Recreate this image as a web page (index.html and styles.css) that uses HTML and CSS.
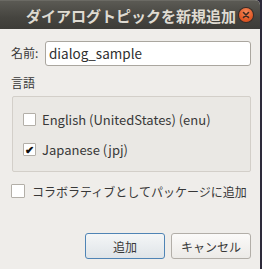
FILE: index.html
```html
<!DOCTYPE html>
<html lang="ja">
<head>
    <meta charset="UTF-8">
    <title>ダイアログトピックを新規追加</title>
    <link rel="stylesheet" href="styles.css">
</head>
<body>
    <div class="window">
        <!-- Title bar -->
        <div class="titlebar">
            <span class="title">ダイアログトピックを新規追加</span>
            <span class="close">
                <svg width="14" height="14" viewBox="0 0 14 14">
                    <path d="M4.5 4.5 L9.5 9.5 M9.5 4.5 L4.5 9.5" stroke="#3a2a22" stroke-width="1.6" stroke-linecap="round"/>
                </svg>
            </span>
        </div>

        <div class="content">
            <div class="name-row">
                <label class="name-label">名前:</label>
                <div class="input">dialog_sample</div>
            </div>

            <div class="section-label">言語</div>

            <div class="frame">
                <div class="check-row">
                    <span class="checkbox"></span>
                    <span class="check-text">English (UnitedStates) (enu)</span>
                </div>
                <div class="check-row">
                    <span class="checkbox checked">✔</span>
                    <span class="check-text">Japanese (jpj)</span>
                </div>
            </div>

            <div class="check-row collab">
                <span class="checkbox"></span>
                <span class="check-text">コラボラティブとしてパッケージに追加</span>
            </div>

            <div class="buttons">
                <button class="btn default">追加</button>
                <button class="btn">キャンセル</button>
            </div>
        </div>
    </div>
</body>
</html>
```

FILE: styles.css
```css
html, body {
    margin: 0;
    padding: 0;
}
body {
    width: 262px;
    height: 269px;
    background: #2d2a3a;
    font-family: "Noto Sans CJK JP", "Noto Sans", sans-serif;
    font-size: 12px;
    color: #383838;
    overflow: hidden;
}
.window {
    width: 260px;
    height: 269px;
    background: #efedea;
    border-top-right-radius: 5px;
    overflow: hidden;
}
.titlebar {
    height: 29px;
    background: linear-gradient(#5b5a54, #45443f 60%, #3d3c38);
    border-top: 1px solid #6b6a64;
    box-sizing: border-box;
    display: flex;
    align-items: center;
    justify-content: flex-end;
    padding-right: 7px;
    gap: 3px;
}
.title {
    color: #dfdbd2;
    font-size: 15px;
    font-weight: bold;
    line-height: 1;
}
.close {
    width: 14px;
    height: 14px;
    border-radius: 50%;
    background: radial-gradient(circle at 50% 30%, #f48a5c, #e25a27 60%, #c8471b);
    box-shadow: 0 0 0 1px #3a2b25;
    display: flex;
}
.content {
    padding: 12px 9px 0 11px;
}
.name-row {
    display: flex;
    align-items: center;
    height: 25px;
}
.name-label {
    width: 34px;
    margin-top: -2px;
}
.input {
    flex: 1;
    height: 25px;
    box-sizing: border-box;
    background: #fff;
    border: 1px solid #aaa69f;
    border-radius: 3px;
    padding: 0 3px;
    line-height: 22px;
    font-size: 13.5px;
    color: #2f2f2f;
}
.section-label {
    margin-top: 8px;
    height: 18px;
    line-height: 18px;
}
.frame {
    margin: 4px 0 0 1px;
    height: 76px;
    box-sizing: border-box;
    background: #eae8e4;
    border: 1px solid #d3cfc9;
    border-radius: 2px;
    padding: 16px 0 0 10px;
    display: flex;
    flex-direction: column;
    gap: 17px;
}
.check-row {
    display: flex;
    align-items: center;
    height: 13px;
    gap: 6px;
    font-size: 13px;
    white-space: nowrap;
}
.checkbox {
    width: 13px;
    height: 13px;
    box-sizing: border-box;
    background: #fff;
    border: 1px solid #b3afa8;
    border-radius: 1px;
    display: flex;
    align-items: center;
    justify-content: center;
    font-size: 11px;
    font-weight: bold;
    color: #111;
    line-height: 1;
}
.collab {
    margin-top: 12px;
    height: 14px;
    gap: 7px;
    font-size: 12px;
}
.collab .checkbox {
    width: 14px;
    height: 14px;
}
.buttons {
    display: flex;
    justify-content: flex-end;
    gap: 6px;
    margin-top: 35px;
}
.btn {
    width: 80px;
    height: 26px;
    font-family: inherit;
    font-size: 12px;
    color: #383838;
    background: linear-gradient(#fbfaf9, #eceae7);
    border: 1px solid #b2aea8;
    border-radius: 3px;
    padding: 0;
}
.btn.default {
    background: linear-gradient(#f4f6f7, #dfe4e8);
    border-color: #4f84b5;
}
```
